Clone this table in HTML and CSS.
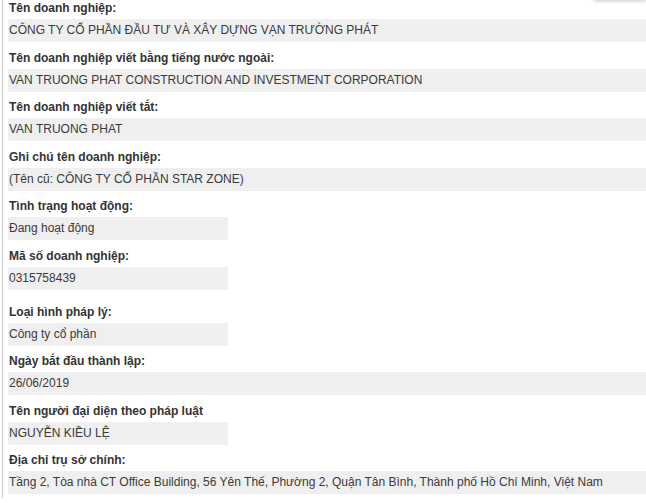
FILE: index.html
```html
<!DOCTYPE html>
<html lang="vi">
<head>
<meta charset="utf-8">
<title>Thông tin doanh nghiệp</title>
<link rel="stylesheet" href="styles.css">
</head>
<body>
<div class="popup-edge"></div>
<div class="panel">
  <div class="item">
    <div class="label">Tên doanh nghiệp:</div>
    <div class="value">CÔNG TY CỔ PHẦN ĐẦU TƯ VÀ XÂY DỰNG VẠN TRƯỜNG PHÁT</div>
  </div>
  <div class="item">
    <div class="label">Tên doanh nghiệp viết bằng tiếng nước ngoài:</div>
    <div class="value">VAN TRUONG PHAT CONSTRUCTION AND INVESTMENT CORPORATION</div>
  </div>
  <div class="item">
    <div class="label">Tên doanh nghiệp viết tắt:</div>
    <div class="value">VAN TRUONG PHAT</div>
  </div>
  <div class="item">
    <div class="label">Ghi chú tên doanh nghiệp:</div>
    <div class="value">(Tên cũ: CÔNG TY CỔ PHẦN STAR ZONE)</div>
  </div>
  <div class="item">
    <div class="label">Tình trạng hoạt động:</div>
    <div class="value short">Đang hoạt động</div>
  </div>
  <div class="item spaced">
    <div class="label">Mã số doanh nghiệp:</div>
    <div class="value short">0315758439</div>
  </div>
  <div class="item">
    <div class="label">Loại hình pháp lý:</div>
    <div class="value short">Công ty cổ phần</div>
  </div>
  <div class="item">
    <div class="label">Ngày bắt đầu thành lập:</div>
    <div class="value">26/06/2019</div>
  </div>
  <div class="item">
    <div class="label">Tên người đại diện theo pháp luật</div>
    <div class="value short">NGUYỄN KIỀU LỆ</div>
  </div>
  <div class="item last">
    <div class="label">Địa chỉ trụ sở chính:</div>
    <div class="value">Tầng 2, Tòa nhà CT Office Building, 56 Yên Thế, Phường 2, Quận Tân Bình, Thành phố Hồ Chí Minh, Việt Nam</div>
  </div>
</div>
</body>
</html>
```

FILE: styles.css
```css
html, body {
  margin: 0;
  padding: 0;
  background: #ffffff;
  overflow: hidden;
}

body {
  font-family: "Liberation Sans", Arial, sans-serif;
  font-size: 12px;
  color: #333333;
}

.popup-edge {
  position: absolute;
  top: -20px;
  right: 0;
  width: 52px;
  height: 20px;
  background: #ffffff;
  box-shadow: 0 1px 4px rgba(0, 0, 0, 0.22);
}

.panel {
  margin-left: 2px;
  border-left: 1px solid #c8c8c8;
  padding: 0 0 4px 5px;
}

.item {
  margin-bottom: 7.5px;
}

.item.spaced {
  margin-bottom: 14px;
}

.item.last {
  margin-bottom: 0;
}

.label {
  font-weight: bold;
  line-height: 17px;
  margin-bottom: 2px;
  padding-left: 1px;
  color: #333333;
}

.value {
  background: #efefef;
  height: 23px;
  line-height: 23px;
  padding-left: 1px;
  white-space: nowrap;
  color: #3a3a3a;
}

.value.short {
  width: 219px;
}
```
